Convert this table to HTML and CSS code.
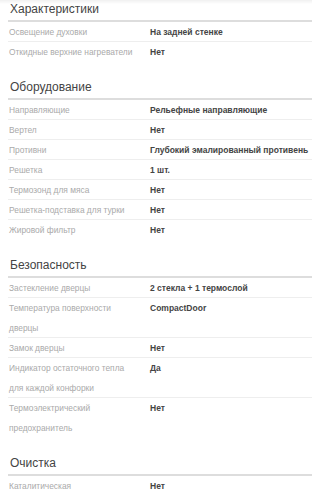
FILE: index.html
```html
<!DOCTYPE html>
<html lang="ru">
<head>
    <meta charset="UTF-8">
    <meta name="viewport" content="width=device-width, initial-scale=1.0">
    <title>Характеристики духовки</title>
    <link rel="stylesheet" href="styles.css">
</head>
<body>
    <div class="specs">
        <!-- Характеристики -->
        <div class="spec-group first">
            <h3 class="spec-title">Характеристики</h3>
            <div class="spec-row">
                <div class="spec-name">Освещение духовки</div>
                <div class="spec-value">На задней стенке</div>
            </div>
            <div class="spec-row">
                <div class="spec-name">Откидные верхние нагреватели</div>
                <div class="spec-value">Нет</div>
            </div>
        </div>

        <!-- Оборудование -->
        <div class="spec-group">
            <h3 class="spec-title">Оборудование</h3>
            <div class="spec-row">
                <div class="spec-name">Направляющие</div>
                <div class="spec-value">Рельефные направляющие</div>
            </div>
            <div class="spec-row">
                <div class="spec-name">Вертел</div>
                <div class="spec-value">Нет</div>
            </div>
            <div class="spec-row">
                <div class="spec-name">Противни</div>
                <div class="spec-value">Глубокий эмалированный противень</div>
            </div>
            <div class="spec-row">
                <div class="spec-name">Решетка</div>
                <div class="spec-value">1 шт.</div>
            </div>
            <div class="spec-row">
                <div class="spec-name">Термозонд для мяса</div>
                <div class="spec-value">Нет</div>
            </div>
            <div class="spec-row">
                <div class="spec-name">Решетка-подставка для турки</div>
                <div class="spec-value">Нет</div>
            </div>
            <div class="spec-row">
                <div class="spec-name">Жировой фильтр</div>
                <div class="spec-value">Нет</div>
            </div>
        </div>

        <!-- Безопасность -->
        <div class="spec-group">
            <h3 class="spec-title">Безопасность</h3>
            <div class="spec-row">
                <div class="spec-name">Застекление дверцы</div>
                <div class="spec-value">2 стекла + 1 термослой</div>
            </div>
            <div class="spec-row">
                <div class="spec-name">Температура поверхности дверцы</div>
                <div class="spec-value">CompactDoor</div>
            </div>
            <div class="spec-row">
                <div class="spec-name">Замок дверцы</div>
                <div class="spec-value">Нет</div>
            </div>
            <div class="spec-row">
                <div class="spec-name">Индикатор остаточного тепла для каждой конфорки</div>
                <div class="spec-value">Да</div>
            </div>
            <div class="spec-row">
                <div class="spec-name">Термоэлектрический предохранитель</div>
                <div class="spec-value">Нет</div>
            </div>
        </div>

        <!-- Очистка -->
        <div class="spec-group">
            <h3 class="spec-title">Очистка</h3>
            <div class="spec-row">
                <div class="spec-name">Каталитическая</div>
                <div class="spec-value">Нет</div>
            </div>
        </div>
    </div>
</body>
</html>
```

FILE: styles.css
```css
* {
    margin: 0;
    padding: 0;
    box-sizing: border-box;
}

body {
    font-family: 'Liberation Sans', Arial, sans-serif;
    background: #fff;
    color: #333;
    overflow: hidden;
}

/* лёгкая тень от шапки сверху */
body::before {
    content: '';
    position: fixed;
    top: 0;
    left: 0;
    right: 0;
    height: 4px;
    background: linear-gradient(rgba(0, 0, 0, 0.06), rgba(0, 0, 0, 0));
}

.specs {
    margin-left: 8px;
}

.spec-group {
    margin-top: 16px;
}

.spec-group.first {
    margin-top: 0;
}

.spec-title {
    font-size: 12px;
    font-weight: 400;
    line-height: 18px;
    color: #444;
    padding: 0 0 2px 2px;
    border-bottom: 2px solid #ddd;
}

.spec-row {
    display: grid;
    grid-template-columns: 142px 1fr;
    box-shadow: inset 0 -1px 0 #eee;
}

.spec-row:last-child {
    box-shadow: none;
}

.spec-name {
    font-size: 8.4px;
    line-height: 20px;
    color: #aaa;
    padding-left: 1px;
    padding-right: 11px;
}

.spec-value {
    font-size: 8.5px;
    line-height: 20px;
    font-weight: 700;
    color: #444;
    white-space: nowrap;
}
```
